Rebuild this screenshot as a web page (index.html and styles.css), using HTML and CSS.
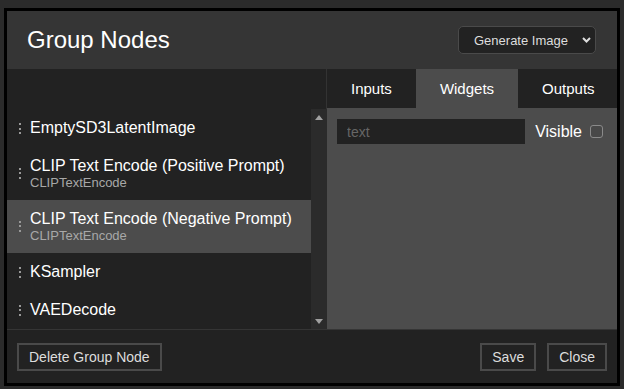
FILE: index.html
```html
<html>
	<head>
		<title>Group Nodes</title>
		<link rel="stylesheet" href="styles.css">
	</head>
	<body>
		<div class="dialog">
			<div class="dialog-header">
				<h2 class="title">Group Nodes</h2>
				<div class="select-wrap">
					<select class="node-select">
						<option>Generate Image</option>
					</select>
					<svg class="chevron" width="9" height="6" viewBox="0 0 9 6"><path d="M1 1l3.5 3.5L8 1" fill="none" stroke="#ddd" stroke-width="2"/></svg>
				</div>
			</div>

			<div class="dialog-main">
				<div class="node-panel">
					<div class="node-panel-top"></div>
					<div class="node-scroll">
						<ul class="node-list">
							<li>
								<span class="grip"></span>
								<div class="node-text">
									<div class="node-name">EmptySD3LatentImage</div>
								</div>
							</li>
							<li>
								<span class="grip"></span>
								<div class="node-text">
									<div class="node-name">CLIP Text Encode (Positive Prompt)</div>
									<div class="node-type">CLIPTextEncode</div>
								</div>
							</li>
							<li class="selected">
								<span class="grip"></span>
								<div class="node-text">
									<div class="node-name">CLIP Text Encode (Negative Prompt)</div>
									<div class="node-type">CLIPTextEncode</div>
								</div>
							</li>
							<li>
								<span class="grip"></span>
								<div class="node-text">
									<div class="node-name">KSampler</div>
								</div>
							</li>
							<li>
								<span class="grip"></span>
								<div class="node-text">
									<div class="node-name">VAEDecode</div>
								</div>
							</li>
						</ul>
						<div class="scrollbar">
							<span class="arrow-up"></span>
							<span class="arrow-down"></span>
						</div>
					</div>
				</div>

				<div class="edit-panel">
					<ul class="tabs">
						<li>Inputs</li>
						<li class="active">Widgets</li>
						<li>Outputs</li>
					</ul>
					<div class="tab-body">
						<div class="widget-row">
							<input class="widget-name" type="text" placeholder="text">
							<label class="visible">Visible <input type="checkbox"></label>
						</div>
					</div>
				</div>
			</div>

			<div class="dialog-footer">
				<button>Delete Group Node</button>
				<span class="spacer"></span>
				<button>Save</button>
				<button>Close</button>
			</div>
		</div>
	</body>
</html>
```

FILE: styles.css
```css
* {
	margin: 0;
	padding: 0;
	box-sizing: border-box;
}

body {
	background: #2b2b2b;
	color: #fff;
	font-family: "Liberation Sans", Arial, sans-serif;
}

.dialog {
	width: 616px;
	height: 378px;
	margin: 8px 0 0 4px;
	border: 3px solid #000;
	background: #222;
	display: flex;
	flex-direction: column;
}

/* header */

.dialog-header {
	height: 58px;
	flex-shrink: 0;
	background: #353535;
	display: flex;
	align-items: center;
	justify-content: space-between;
	padding: 0 21px 0 20px;
}

.title {
	font-size: 24px;
	font-weight: normal;
	color: #fff;
}

.select-wrap {
	position: relative;
}

.node-select {
	appearance: none;
	width: 138px;
	height: 28px;
	padding: 0 18px 0 15px;
	background: #222;
	border: 1px solid #4a4a4a;
	border-radius: 5px;
	color: #ddd;
	font-family: "Liberation Sans", Arial, sans-serif;
	font-size: 13px;
}

.chevron {
	position: absolute;
	right: 5px;
	top: 11px;
}

/* main area */

.dialog-main {
	height: 260px;
	flex-shrink: 0;
	display: flex;
}

.node-panel {
	width: 320px;
	flex-shrink: 0;
	display: flex;
	flex-direction: column;
	background: #222;
}

.node-panel-top {
	height: 40px;
	flex-shrink: 0;
	border-right: 1px solid #333;
}

.node-scroll {
	flex: 1;
	display: flex;
	overflow: hidden;
}

.node-list {
	flex: 1;
	list-style: none;
	overflow: hidden;
}

.node-list li {
	display: flex;
	align-items: center;
	gap: 9px;
	padding: 10px 12px;
	white-space: nowrap;
}

.node-list li.selected {
	background: #4c4c4c;
}

.grip {
	width: 2px;
	height: 11px;
	flex-shrink: 0;
	background: repeating-linear-gradient(#999 0 2px, transparent 2px 4.5px);
}

.node-name {
	font-size: 16px;
	line-height: 18px;
	color: #fff;
}

.node-type {
	font-size: 13px;
	line-height: 15px;
	color: #a8a8a8;
}

.scrollbar {
	width: 16px;
	flex-shrink: 0;
	background: #2b2b2b;
	display: flex;
	flex-direction: column;
	justify-content: space-between;
	align-items: center;
	padding: 6px 0 5px;
}

.arrow-up {
	border-left: 4.5px solid transparent;
	border-right: 4.5px solid transparent;
	border-bottom: 5px solid #a0a0a0;
}

.arrow-down {
	border-left: 4.5px solid transparent;
	border-right: 4.5px solid transparent;
	border-top: 5px solid #a0a0a0;
}

.edit-panel {
	flex: 1;
	min-width: 0;
	display: flex;
	flex-direction: column;
	background: #4c4c4c;
}

.tabs {
	list-style: none;
	display: flex;
	background: #222;
	overflow: hidden;
}

.tabs li {
	padding: 0 24px;
	line-height: 39px;
	font-size: 15px;
	color: #fff;
	white-space: nowrap;
}

.tabs li.active {
	background: #4c4c4c;
}

.tab-body {
	padding: 11px 14px 0 10px;
}

.widget-row {
	display: flex;
	align-items: center;
	gap: 10px;
}

.widget-name {
	flex: 1;
	min-width: 0;
	height: 25px;
	padding: 0 10px;
	background: #222;
	border: none;
	color: #ddd;
	font-family: "Liberation Sans", Arial, sans-serif;
	font-size: 14px;
}

.widget-name::placeholder {
	color: #666;
}

.visible {
	display: flex;
	align-items: center;
	gap: 8px;
	font-size: 16px;
	color: #fff;
}

.visible input {
	appearance: none;
	width: 13px;
	height: 13px;
	border: 1px solid #8a8a8a;
	border-radius: 3px;
	background: #484848;
}

/* footer */

.dialog-footer {
	flex: 1;
	border-top: 1px solid #353535;
	display: flex;
	align-items: center;
	gap: 11px;
	padding: 1px 10px 0;
}

.spacer {
	flex: 1;
}

.dialog-footer button {
	height: 28px;
	padding: 0 10px;
	background: #222;
	border: 2px solid #4a4a4a;
	color: #ddd;
	font-family: "Liberation Sans", Arial, sans-serif;
	font-size: 14px;
}
```
